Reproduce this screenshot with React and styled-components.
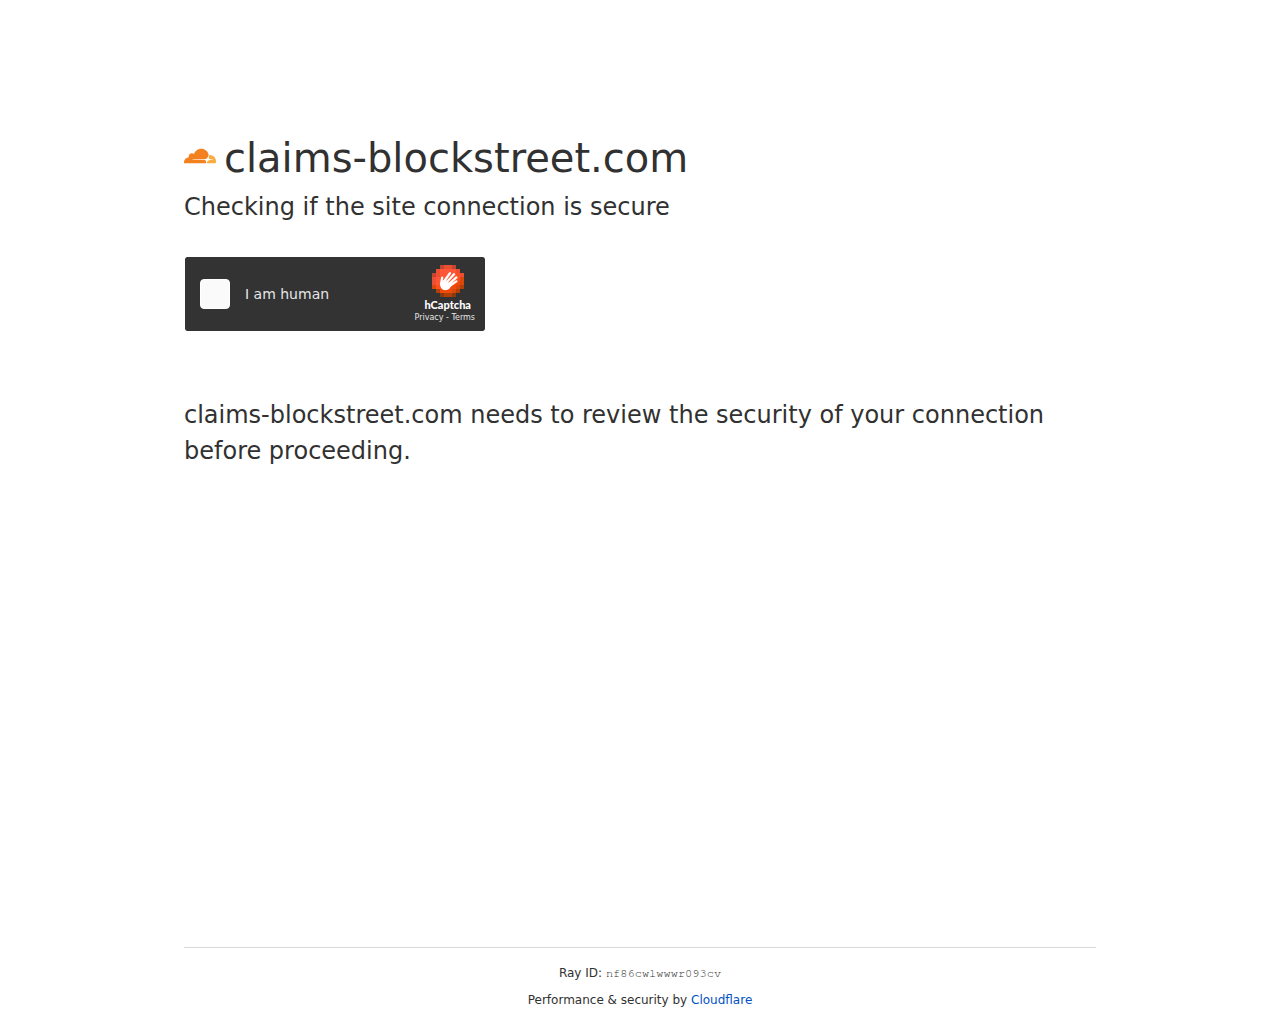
import styled, { createGlobalStyle } from 'styled-components';

const GlobalStyle = createGlobalStyle`
  * {
    box-sizing: border-box;
    margin: 0;
    padding: 0;
  }

  body {
    background-color: #fff;
    color: #313131;
    font-family: 'DejaVu Sans', sans-serif;
  }
`;

const host = 'claims-blockstreet.com';

const CloudIcon = () => (
  <CloudSvg viewBox="0 6 24 12" aria-hidden="true">
    <path
      fill="#f48120"
      d="M16.5088 16.8447c.1475-.5068.0908-.9707-.1553-1.3154-.2246-.3164-.6045-.499-1.0615-.5205l-8.6592-.1123a.1559.1559 0 0 1-.1333-.0713c-.0283-.042-.0351-.0986-.021-.1553.0278-.084.1123-.1484.2036-.1562l8.7359-.1123c1.0351-.0489 2.1601-.8868 2.5537-1.9136l.499-1.3013c.0215-.0561.0293-.1128.0147-.168-.5625-2.5463-2.835-4.4453-5.5499-4.4453-2.5039 0-4.6284 1.6177-5.3876 3.8614-.4927-.3658-1.1187-.5625-1.794-.499-1.2026.119-2.1665 1.083-2.2861 2.2856-.0283.31-.0069.6128.0635.894C1.5683 13.171 0 14.7754 0 16.752c0 .1748.0142.3515.0352.5273.0141.083.0844.1475.1689.1475h15.9814c.0909 0 .1758-.0645.2032-.1553l.12-.4268z"
    />
    <path
      fill="#faad3f"
      d="M19.2656 11.2813c-.0771 0-.1611 0-.2383.0112-.0566 0-.1054.0415-.127.0976l-.3378 1.1744c-.1475.5068-.0918.9707.1543 1.3164.2256.3164.6055.498 1.0625.5195l1.8437.1133c.0557 0 .1055.0263.1329.0703.0283.043.0351.1074.0214.1562-.0283.084-.1132.1485-.204.1553l-1.921.1123c-1.041.0488-2.1582.8867-2.5527 1.914l-.1406.3585c-.0283.0713.0215.1416.0986.1416h6.5977c.0771 0 .1474-.0489.169-.126.1122-.4082.1757-.837.1757-1.2803 0-2.6025-2.125-4.727-4.7344-4.727"
    />
  </CloudSvg>
);

// one string per pixel row, each letter a shade
const shades = {
  a: '#c4452f',
  b: '#ea4e33',
  c: '#ff5636',
  d: '#fb5120',
  e: '#f04b0c',
  f: '#d9480a',
  g: '#b04008',
  h: '#8a3a10',
};

const pixels = [
  '..abba..',
  '.bccccb.',
  'abccccdb',
  'bcccdddf',
  'bcdddeef',
  'fdddeefg',
  '.geeefg.',
  '..hggh..',
];

const HandLogo = () => (
  <LogoSvg viewBox="0 0 32 32" aria-hidden="true">
    {pixels.map((row, y) =>
      [...row].map((shade, x) =>
        shade === '.' ? null : (
          <rect key={`${x}-${y}`} x={x * 4} y={y * 4} width="4" height="4" fill={shades[shade]} shapeRendering="crispEdges" />
        )
      )
    )}
    <g fill="none" stroke="#fff" strokeLinecap="round">
      <path strokeWidth="2.3" d="M9.2 18.8 10.2 12.6M12 16.5 18 8.2M14.5 17.5 22 9.3M16.5 19.3 24.4 12.4M17.5 21 24.4 16.4" />
    </g>
    <path
      fill="#fff"
      d="M8 17.8c.8-1.2 2.6-1.2 3.4-2.4l1.8-.8 6.2 5.2c-.4 2.6-2.2 4.8-5 5.3-3.7.7-6.6-2-6.4-7.3z"
    />
  </LogoSvg>
);

const App = () => {
  return (
    <Page>
      <GlobalStyle />
      <Main>
        <Title>
          <CloudIcon />
          {host}
        </Title>
        <Subtitle>Checking if the site connection is secure</Subtitle>

        <Widget>
          <CheckLabel>
            <Checkbox type="checkbox" />
            I am human
          </CheckLabel>
          <Brand>
            <HandLogo />
            <BrandName>hCaptcha</BrandName>
            <Legal>
              <LegalLink href="#privacy">Privacy</LegalLink> - <LegalLink href="#terms">Terms</LegalLink>
            </Legal>
          </Brand>
        </Widget>

        <Message>{`${host} needs to review the security of your connection before proceeding.`}</Message>
      </Main>

      <Footer>
        <FooterInner>
          <p>
            Ray ID: <RayId>nf86cwlwwwr093cv</RayId>
          </p>
          <p>
            Performance &amp; security by <FooterLink href="#cloudflare">Cloudflare</FooterLink>
          </p>
        </FooterInner>
      </Footer>
    </Page>
  );
};

const Page = styled.div`
  display: flex;
  flex-direction: column;
  min-height: 100vh;
`;

const Main = styled.main`
  flex: 1;
  width: 100%;
  max-width: 960px;
  margin: 128px auto 0;
  padding: 0 24px;
`;

const Title = styled.h1`
  display: flex;
  align-items: center;
  gap: 8px;
  font-size: 40px;
  font-weight: 400;
  line-height: 60px;
`;

const CloudSvg = styled.svg`
  width: 32px;
  height: 16px;
  flex-shrink: 0;
  margin-bottom: 4px;
`;

const Subtitle = styled.h2`
  font-size: 24px;
  font-weight: 400;
  line-height: 38px;
`;

const Widget = styled.section`
  display: flex;
  align-items: center;
  justify-content: space-between;
  width: 302px;
  height: 76px;
  margin: 30px 0 65px;
  padding: 0 10px 0 15px;
  border: 1px solid #fff;
  border-radius: 3px;
  background-color: #333;
  background-clip: padding-box;
`;

const CheckLabel = styled.label`
  display: flex;
  align-items: center;
  gap: 15px;
  color: #e6e6e6;
  font-size: 14px;
`;

const Checkbox = styled.input`
  appearance: none;
  width: 30px;
  height: 30px;
  border: 1px solid #fff;
  border-radius: 4px;
  background-color: #fafafa;
`;

const Brand = styled.div`
  display: flex;
  flex-direction: column;
  align-items: center;
`;

const LogoSvg = styled.svg`
  width: 32px;
  height: 32px;
  margin-right: -6px;
`;

const BrandName = styled.span`
  margin-right: -6px;
  color: #fff;
  font-family: Lato, sans-serif;
  font-size: 11px;
  font-weight: 900;
  line-height: 16px;
`;

const Legal = styled.span`
  color: #e6e6e6;
  font-size: 8px;
  line-height: 10px;
`;

const LegalLink = styled.a`
  color: inherit;
  text-decoration: none;
`;

const Message = styled.p`
  font-size: 24px;
  line-height: 36px;
`;

const Footer = styled.footer`
  width: 100%;
  max-width: 960px;
  margin: 0 auto;
  padding: 0 24px;
  font-size: 12px;
  line-height: 18px;
  text-align: center;
`;

const FooterInner = styled.div`
  display: flex;
  flex-direction: column;
  gap: 9px;
  padding: 16px 0 15px;
  border-top: 1px solid #d9d9d9;
`;

const RayId = styled.code`
  font-family: FreeMono, 'Liberation Mono', monospace;
  font-size: 12px;
`;

const FooterLink = styled.a`
  color: #0051c3;
  text-decoration: none;
`;

export default App;
